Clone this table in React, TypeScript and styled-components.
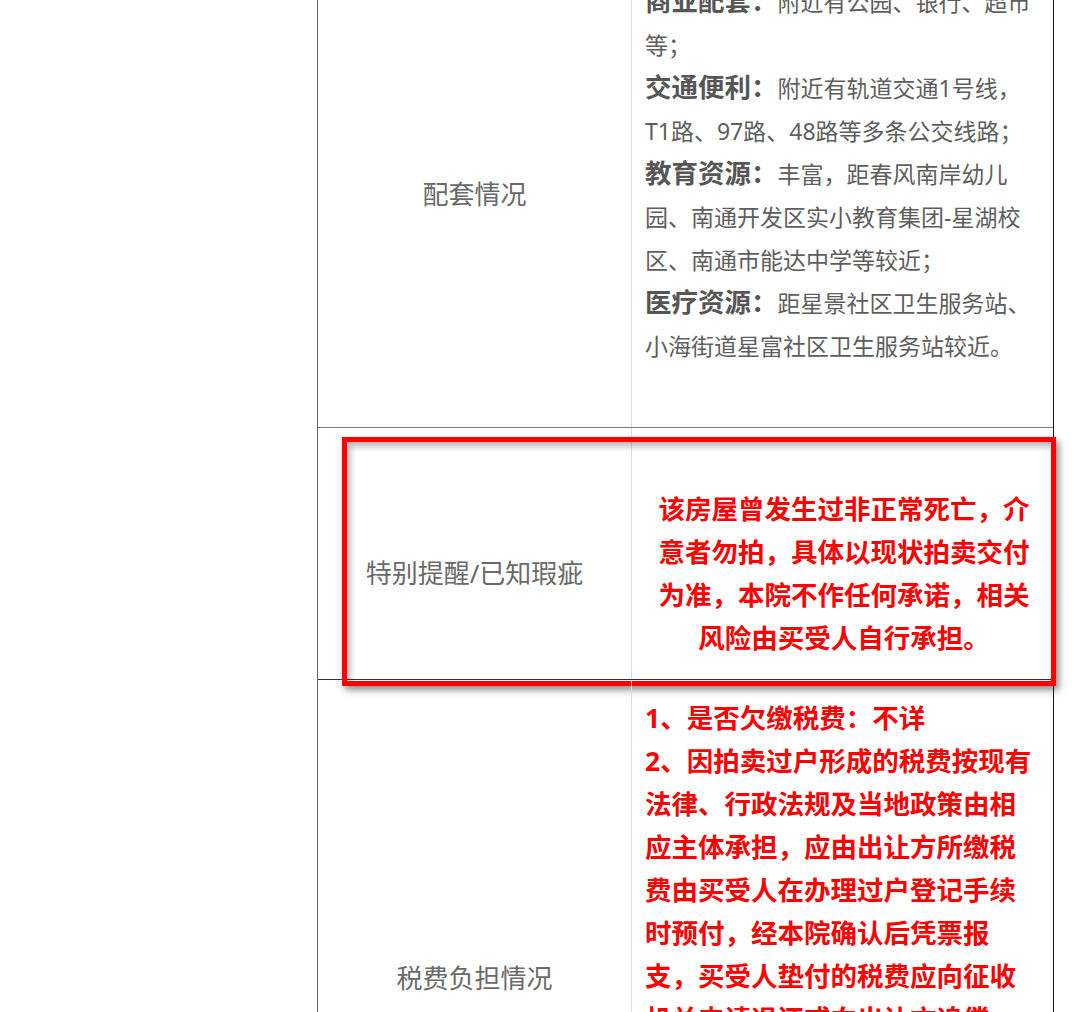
import styled, { createGlobalStyle } from 'styled-components';

const GlobalStyle = createGlobalStyle`
  html, body {
    margin: 0;
    padding: 0;
    background: #fff;
  }
  body {
    font-family: 'Noto Sans', 'Noto Sans CJK SC', sans-serif;
  }
`;

function App() {
  return (
    <>
      <GlobalStyle />
      <Page>
        <Table>
          <Row border='#7a7a7a'>
            <Label>配套情况</Label>
            <Cell pad='16px 10px 16px 13px'>
              <Strong>商业配套：</Strong>附近有公园、银行、超市<br />
              等；<br />
              <Strong>交通便利：</Strong>附近有轨道交通1号线，<br />
              T1路、97路、48路等多条公交线路；<br />
              <Strong>教育资源：</Strong>丰富，距春风南岸幼儿<br />
              园、南通开发区实小教育集团-星湖校<br />
              区、南通市能达中学等较近；<br />
              <Strong>医疗资源：</Strong>距星景社区卫生服务站、<br />
              小海街道星富社区卫生服务站较近。<br />
              <br />
            </Cell>
          </Row>

          <Row border='#333'>
            <Label lead>特别提醒/已知瑕疵</Label>
            <Cell center pad='17px 10px 19px 13px'>
              <Warn lead>
                该房屋曾发生过非正常死亡，介<br />
                意者勿拍，具体以现状拍卖交付<br />
                为准，本院不作任何承诺，相关<br />
                风险由买受人自行承担。
              </Warn>
            </Cell>
            <Highlight />
          </Row>

          <Row border='#333' minHeight={600}>
            <Label>税费负担情况</Label>
            <Cell pad='17px 10px 17px 13px'>
              <Warn>
                1、是否欠缴税费：不详<br />
                2、因拍卖过户形成的税费按现有<br />
                法律、行政法规及当地政策由相<br />
                应主体承担，应由出让方所缴税<br />
                费由买受人在办理过户登记手续<br />
                时预付，经本院确认后凭票报<br />
                支，买受人垫付的税费应向征收<br />
                机关申请退还或向出让方追偿。
              </Warn>
            </Cell>
          </Row>
        </Table>
      </Page>
    </>
  );
}

export default App;

const Page = styled.div`
  width: 1080px;
  height: 1012px;
  overflow: hidden;
  padding-left: 317px;
  box-sizing: border-box;
`;

const Table = styled.div`
  width: 737px;
  margin-top: -35px;
  border-left: 1.5px solid #666;
  border-right: 1px solid #1a1a1a;
  box-sizing: border-box;
`;

const Row = styled.div<{ border: string; minHeight?: number }>`
  position: relative;
  display: grid;
  grid-template-columns: 314px 1fr;
  border-bottom: 1.5px solid ${({ border }) => border};
  min-height: ${({ minHeight }) => (minHeight ? `${minHeight}px` : 'auto')};
`;

const Label = styled.div<{ lead?: boolean }>`
  display: flex;
  align-items: center;
  justify-content: center;
  border-right: 1px solid #dcdcdc;
  padding-top: ${({ lead }) => (lead ? '43px' : '0')};
  padding-bottom: 6px;
  font-size: 26px;
  color: #6a6a6a;
`;

const Cell = styled.div<{ center?: boolean; pad: string }>`
  padding: ${({ pad }) => pad};
  font-size: 23px;
  line-height: 43px;
  color: #5e5e5e;
  text-align: ${({ center }) => (center ? 'center' : 'left')};
  white-space: nowrap;
`;

const Strong = styled.span`
  font-size: 26.5px;
  line-height: 1;
  font-weight: 700;
  color: #565656;
`;

const Warn = styled.div<{ lead?: boolean }>`
  padding-top: ${({ lead }) => (lead ? '43px' : '0')};
  font-size: 26.5px;
  line-height: 43px;
  font-weight: 700;
  color: #ff0000;
`;

const Highlight = styled.div`
  position: absolute;
  top: 9px;
  left: 24px;
  width: 714px;
  height: 249px;
  box-sizing: border-box;
  border: 5px solid #ff0000;
  box-shadow: 3px 4px 7px rgba(0, 0, 0, 0.45), inset 3px 4px 7px rgba(0, 0, 0, 0.3);
  pointer-events: none;
`;
